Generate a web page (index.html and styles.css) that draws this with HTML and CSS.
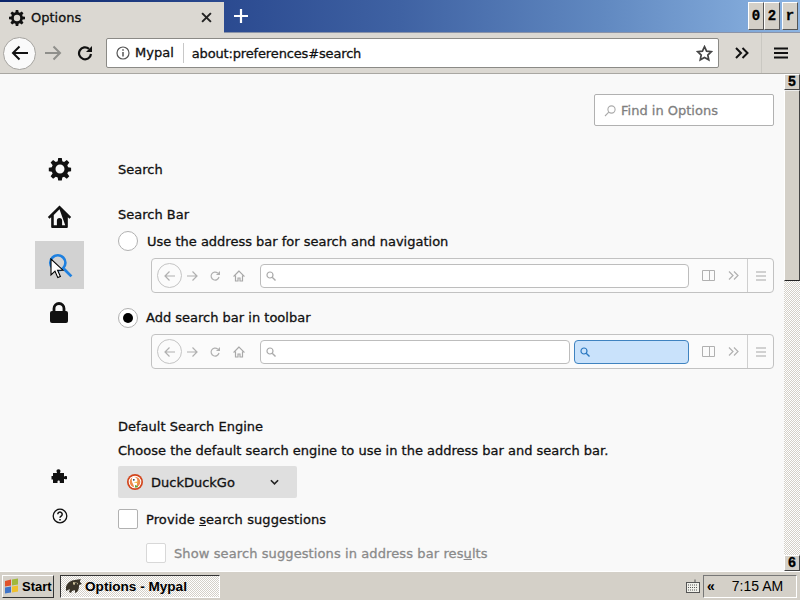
FILE: index.html
```html
<!DOCTYPE html>
<html lang="en">
<head>
<meta charset="UTF-8" />
<title>Options - Mypal</title>
<link rel="stylesheet" href="styles.css">
</head>
<body>
  <div class="titlebar">
    <div class="tab">
      <svg class="tab-icon" viewBox="0 0 18 18"><path d="M7.600 0h2.800l.4 2.600 1.400.6 2.100-1.600 2 2-1.500 2.100.6 1.500 2.600.4v2.800l-2.600.4-.6 1.400 1.500 2.100-2 2-2.100-1.500-1.400.6-.4 2.600H7.600l-.4-2.600-1.500-.6-2.100 1.500-2-2 1.600-2.100-.6-1.400L0 10.400V7.600l2.600-.4.6-1.500-1.600-2.100 2-2 2.100 1.600 1.500-.6zM9 5.400a3.600 3.600 0 1 0 0 7.200 3.600 3.600 0 0 0 0-7.200z" fill="#111" fill-rule="evenodd"/></svg>
      <span class="tab-title">Options</span>
      <svg class="tab-close" viewBox="0 0 10 10"><path d="M1 1l8 8M9 1l-8 8" stroke="#222" stroke-width="1.800"/></svg>
    </div>
    <svg class="new-tab" viewBox="0 0 14 14"><path d="M7 0v14M0 7h14" stroke="#fff" stroke-width="2.200"/></svg>
    <div class="win-buttons">
      <span class="win-btn">0</span><span class="win-btn">2</span><span class="win-btn win-close">r</span>
    </div>
  </div>

  <div class="toolbar">
    <div class="back-btn">
      <svg viewBox="0 0 18 16" width="18" height="16"><path d="M17 8H2M8.500 1.500L2 8l6.500 6.500" fill="none" stroke="#111" stroke-width="2"/></svg>
    </div>
    <svg class="fwd" viewBox="0 0 18 16" width="18" height="16"><path d="M1 8h15M9.500 1.500L16 8l-6.500 6.500" fill="none" stroke="#8f8f8b" stroke-width="2"/></svg>
    <svg class="reload" viewBox="0 0 16 16" width="16" height="16"><path d="M14 9a6 6 0 1 1-2-5.200" fill="none" stroke="#111" stroke-width="2.200"/><path d="M15 1v6H9z" fill="#111"/></svg>
    <div class="urlbar">
      <svg class="info" viewBox="0 0 14 14" width="14" height="14"><circle cx="7" cy="7" r="6" fill="none" stroke="#555" stroke-width="1.200"/><path d="M7 6v4.500M7 3.300v1.500" stroke="#555" stroke-width="1.500"/></svg>
      <span class="identity">Mypal</span>
      <span class="url">about:preferences#search</span>
      <svg class="star" viewBox="0 0 18 18" width="17" height="17"><path d="M9 1.800l2.200 4.700 5 .6-3.700 3.500 1 5.100L9 13.200l-4.500 2.500 1-5.100L1.800 7.100l5-.6z" fill="none" stroke="#444" stroke-width="1.800"/></svg>
    </div>
    <svg class="overflow" viewBox="0 0 14 12" width="14" height="12"><path d="M1 1l5 5-5 5M7.500 1l5 5-5 5" fill="none" stroke="#111" stroke-width="2"/></svg>
    <div class="menu-btn">
      <svg viewBox="0 0 14 12" width="14" height="12"><path d="M0 1.500h14M0 6h14M0 10.500h14" stroke="#111" stroke-width="2"/></svg>
    </div>
  </div>

  <div class="content">
    <div class="page">
      <div class="find-row">
        <div class="find-box">
          <svg viewBox="0 0 12 12" width="12" height="12"><circle cx="7.500" cy="4.500" r="3.600" fill="none" stroke="#aaa" stroke-width="1.100"/><path d="M4.800 7.200L1 11" stroke="#aaa" stroke-width="1.100"/></svg>
          <span>Find in Options</span>
        </div>
      </div>
      <div class="columns">
        <div class="sidebar">
          <div class="nav-item">
            <svg viewBox="0 0 24 24" width="24" height="24"><path d="M10.200 1h3.600l.5 3.300 1.800.8 2.700-2 2.500 2.500-2 2.700.8 1.900 3 .5v3.600l-3 .5-.8 1.800 2 2.700-2.500 2.500-2.700-2-1.800.8-.5 3h-3.600l-.5-3-1.900-.8-2.700 2-2.500-2.500 2-2.700-.8-1.800-3-.5v-3.600l3-.5.800-1.900-2-2.700 2.500-2.500 2.700 2 1.900-.8zM12 7.500a4.500 4.500 0 1 0 0 9 4.500 4.500 0 0 0 0-9z" fill="#111" fill-rule="evenodd"/></svg>
          </div>
          <div class="nav-item nav-home">
            <svg viewBox="0 0 24 24" width="25" height="25"><path d="M12 1.500L0.800 12.500l1.600 1.700 1.600-1.500V22a1 1 0 0 0 1 1h14a1 1 0 0 0 1-1v-9.300l1.600 1.500 1.600-1.700zM17.500 20.500h-3V16a2.500 2.500 0 0 0-5 0v4.500h-3v-10L12 5z" fill="#111" fill-rule="evenodd"/></svg>
          </div>
          <div class="nav-item nav-active">
            <svg viewBox="0 0 24 24" width="26" height="26"><circle cx="10" cy="10" r="7" fill="none" stroke="#1e80e0" stroke-width="2.400"/><path d="M15.500 15.500l7 7" stroke="#1e80e0" stroke-width="2.600"/></svg>
          </div>
          <div class="nav-item nav-lock">
            <svg viewBox="0 0 20 22" width="20" height="22"><path d="M5 9V6.500a5 5 0 0 1 10 0V9" fill="none" stroke="#111" stroke-width="2.800"/><rect x="1" y="9" width="18" height="12" rx="2" fill="#111"/></svg>
          </div>
          <div class="nav-spacer"></div>
          <div class="nav-small nav-puzzle">
            <svg viewBox="0 0 16 16" width="16" height="16"><path d="M2 5h3.500c.5 0 .6-.4.3-.8-.7-1-.3-3 1.700-3s2.400 2 1.700 3c-.3.4-.2.800.3.800H13v3c0 .5.400.6.800.3 1-.6 2.700-.2 2.700 1.400s-1.700 2-2.700 1.400c-.4-.3-.8-.2-.8.3V15H8.800v-1.500c0-1.200-2.300-1.200-2.300 0V15H2v-3.600H.5V8H2z" fill="#111"/></svg>
          </div>
          <div class="nav-small">
            <svg viewBox="0 0 16 16" width="16" height="16"><circle cx="8" cy="8" r="6.800" fill="none" stroke="#111" stroke-width="1.300"/><path d="M5.800 6.300a2.200 2.200 0 1 1 3.400 1.800c-.8.500-1.200.9-1.200 1.700" fill="none" stroke="#111" stroke-width="1.500"/><path d="M8 11v1.600" stroke="#111" stroke-width="1.600"/></svg>
          </div>
        </div>

        <div class="main">
          <h1>Search</h1>
          <h2 class="search-bar-title">Search Bar</h2>
          <label class="radio-row"><span class="radio"></span>Use the address bar for search and navigation</label>
          <div class="preview">
            <span class="mini-back"><svg viewBox="0 0 12 12" width="12" height="12"><path d="M11 6H1M5.500 1.500L1 6l4.500 4.500" fill="none" stroke="#b0b0b0" stroke-width="1.200"/></svg></span>
            <svg class="mini-fwd" viewBox="0 0 12 12" width="12" height="12"><path d="M1 6h10M6.500 1.500L11 6l-4.500 4.500" fill="none" stroke="#b0b0b0" stroke-width="1.200"/></svg>
            <svg class="mini-reload" viewBox="0 0 12 12" width="12" height="12"><path d="M10 7a4 4 0 1 1-1.300-4" fill="none" stroke="#b0b0b0" stroke-width="1.200"/><path d="M11 1v4H7z" fill="#b0b0b0"/></svg>
            <svg class="mini-home" viewBox="0 0 12 12" width="12" height="12"><path d="M6 1L1 6h1.500v5h2.500V8h2v3h2.500V6H11z" fill="none" stroke="#a8a8a8" stroke-width="1.200"/></svg>
            <div class="mini-field mini-url"><svg viewBox="0 0 10 10" width="10" height="10"><circle cx="4" cy="4" r="3" fill="none" stroke="#aaa" stroke-width="1.200"/><path d="M6.200 6.200L9.500 9.500" stroke="#aaa" stroke-width="1.400"/></svg></div>
            <svg class="mini-side" viewBox="0 0 13 11" width="13" height="11"><path d="M.5.500h12v10H.5zM7.500.5v10" fill="none" stroke="#b0b0b0"/></svg>
            <svg class="mini-more" viewBox="0 0 11 9" width="11" height="9"><path d="M1 .5l4 4-4 4M6 .5l4 4-4 4" fill="none" stroke="#b0b0b0" stroke-width="1.200"/></svg>
            <span class="mini-menu"><svg viewBox="0 0 10 10" width="10" height="10"><path d="M0 1h10M0 5h10M0 9h10" stroke="#a8a8a8" stroke-width="1.100"/></svg></span>
          </div>
          <label class="radio-row radio-row-2"><span class="radio radio-on"></span><span class="radio-text">Add search bar in toolbar</span></label>
          <div class="preview preview-2">
            <span class="mini-back"><svg viewBox="0 0 12 12" width="12" height="12"><path d="M11 6H1M5.500 1.500L1 6l4.500 4.500" fill="none" stroke="#b0b0b0" stroke-width="1.200"/></svg></span>
            <svg class="mini-fwd" viewBox="0 0 12 12" width="12" height="12"><path d="M1 6h10M6.500 1.500L11 6l-4.500 4.500" fill="none" stroke="#b0b0b0" stroke-width="1.200"/></svg>
            <svg class="mini-reload" viewBox="0 0 12 12" width="12" height="12"><path d="M10 7a4 4 0 1 1-1.300-4" fill="none" stroke="#b0b0b0" stroke-width="1.200"/><path d="M11 1v4H7z" fill="#b0b0b0"/></svg>
            <svg class="mini-home" viewBox="0 0 12 12" width="12" height="12"><path d="M6 1L1 6h1.500v5h2.500V8h2v3h2.500V6H11z" fill="none" stroke="#a8a8a8" stroke-width="1.200"/></svg>
            <div class="mini-field mini-url"><svg viewBox="0 0 10 10" width="10" height="10"><circle cx="4" cy="4" r="3" fill="none" stroke="#aaa" stroke-width="1.200"/><path d="M6.200 6.200L9.500 9.500" stroke="#aaa" stroke-width="1.400"/></svg></div>
            <div class="mini-field mini-search"><svg viewBox="0 0 10 10" width="10" height="10"><circle cx="4" cy="4" r="3" fill="none" stroke="#2a78c0" stroke-width="1.200"/><path d="M6.200 6.200L9.500 9.500" stroke="#2a78c0" stroke-width="1.400"/></svg></div>
            <svg class="mini-side" viewBox="0 0 13 11" width="13" height="11"><path d="M.5.500h12v10H.5zM7.500.5v10" fill="none" stroke="#b0b0b0"/></svg>
            <svg class="mini-more" viewBox="0 0 11 9" width="11" height="9"><path d="M1 .5l4 4-4 4M6 .5l4 4-4 4" fill="none" stroke="#b0b0b0" stroke-width="1.200"/></svg>
            <span class="mini-menu"><svg viewBox="0 0 10 10" width="10" height="10"><path d="M0 1h10M0 5h10M0 9h10" stroke="#a8a8a8" stroke-width="1.100"/></svg></span>
          </div>

          <h2 class="engine-title">Default Search Engine</h2>
          <p class="engine-desc">Choose the default search engine to use in the address bar and search bar.</p>
          <div class="dropdown">
            <svg viewBox="0 0 16 16" width="16" height="16"><circle cx="8" cy="8" r="8" fill="#d2451c"/><circle cx="8" cy="8" r="6.300" fill="#fff"/><circle cx="8" cy="8" r="5.300" fill="#ee8a4a"/><path d="M5.300 3.300c2.500-1 5 .4 5 3 0 2.200-.5 3.500-.5 6.700H7c0-2.500-2.200-4-2.200-6.500 0-1.200.2-2.200.5-3.200z" fill="#fff"/><path d="M6.500 8.300l4.200-.8v1.800z" fill="#f2b632"/><circle cx="6.800" cy="5.800" r=".9" fill="#234"/><path d="M8 11l2.800 1v1.500H8z" fill="#5fa33a"/></svg>
            <span class="dropdown-label">DuckDuckGo</span>
            <svg class="chevron" viewBox="0 0 10 6" width="9" height="6"><path d="M1 1l4 4 4-4" fill="none" stroke="#222" stroke-width="1.800"/></svg>
          </div>
          <label class="check-row"><span class="checkbox"></span><span>Provide <u>s</u>earch suggestions</span></label>
          <label class="check-row check-sub"><span class="checkbox"></span><span>Show search suggestions in address bar res<u>u</u>lts</span></label>
        </div>
      </div>
      <svg class="cursor" viewBox="0 0 14 22" width="14" height="22"><path d="M1 1v16l4-3.800 2.800 6.400 2.600-1.100-2.800-6.300h5.400z" fill="#fff" stroke="#000" stroke-width="1.100"/></svg>
    </div>

    <div class="scrollbar">
      <span class="sb-btn">5</span>
      <div class="sb-track"><div class="sb-thumb"></div></div>
      <span class="sb-btn">6</span>
    </div>
  </div>

  <div class="taskbar">
    <div class="start">
      <svg viewBox="0 0 16 16" width="16" height="16"><path d="M1 3l6-1.500V7.500L1 8.500z" fill="#e0522a"/><path d="M8 1.500L14 .5v6L8 7.500z" fill="#a0b83c"/><path d="M1 9.500l6-1v6L1 15.500z" fill="#3f74c8"/><path d="M8 8.500l6-1v6l-6 1z" fill="#f0c02c"/></svg>
      <span>Start</span>
    </div>
    <div class="task">
      <svg viewBox="0 0 18 16" width="18" height="16"><path d="M1 9c1-4 5-7 9-7 2 0 4-1 6-1-1 1-1 2-1 3l2 2-3 1c0 2 0 5-2 7l-2 1 0-3-3 1-1 2-2-1 1-3-4 2z" fill="#3a3428"/><path d="M8 4l5 1-1 2-4-.5z" fill="#cbbf98"/><circle cx="11" cy="6" r="1" fill="#111"/></svg>
      <span>Options - Mypal</span>
    </div>
    <svg class="keyboard" viewBox="0 0 14 14" width="14" height="14"><path d="M9 .5v3" stroke="#555"/><rect x=".5" y="3.500" width="13" height="10" fill="#f0f0ea" stroke="#555"/><path d="M2 6h10M2 8.500h10M2 11h10" stroke="#555" stroke-dasharray="1 1"/></svg>
    <div class="tray">
      <span class="tray-arrows">«</span>
      <span class="clock">7:15 AM</span>
    </div>
  </div>
</body>
</html>
```

FILE: styles.css
```css
html, body {
  margin: 0;
  padding: 0;
  width: 800px;
  height: 600px;
  overflow: hidden;
}
body {
  display: flex;
  flex-direction: column;
  font-family: "DejaVu Sans", sans-serif;
  font-size: 13px;
  color: #111;
  background: #d4d0c8;
  -webkit-text-stroke: 0.3px;
}
svg {
  display: block;
  flex: none;
}

/* title bar with the tab */
.titlebar {
  height: 33px;
  display: flex;
  align-items: flex-start;
  background: linear-gradient(90deg, #0a246a 0%, #2b4a90 28%, #3f62a3 50%, #6088c0 75%, #8cb4e2 100%);
  box-shadow: inset 0 -1px 0 #8a93a8;
}
.tab {
  width: 224px;
  height: 31px;
  margin-top: 2px;
  background: #dbd8d2;
  display: flex;
  align-items: center;
  padding: 0 12px 0 9px;
  box-sizing: border-box;
}
.tab-title {
  margin-left: 6px;
  flex: 1;
}
.tab-icon { width: 16px; height: 16px; }
.tab-close { width: 11px; height: 11px; }
.new-tab {
  width: 14px;
  height: 14px;
  margin: 9px 0 0 10px;
}
.win-buttons {
  margin-left: auto;
  margin-right: 2px;
  margin-top: 2px;
  display: flex;
}
.win-btn {
  width: 16px;
  height: 28px;
  background: #d4d0c8;
  border: 1px solid;
  border-color: #fff #555 #555 #fff;
  box-sizing: border-box;
  font-family: "Liberation Mono", monospace;
  font-weight: bold;
  font-size: 14px;
  line-height: 26px;
  text-align: center;
  color: #000;
}
.win-close { margin-left: 2px; }

/* navigation toolbar */
.toolbar {
  height: 41px;
  display: flex;
  align-items: center;
  background: #dbd8d2;
  border-bottom: 1px solid #a9a7a2;
  box-sizing: border-box;
  padding-left: 3px;
}
.back-btn {
  width: 33px;
  height: 33px;
  border-radius: 50%;
  background: #fafafa;
  border: 1px solid #a5a39f;
  box-sizing: border-box;
  display: flex;
  align-items: center;
  justify-content: center;
}
.fwd { margin-left: 8px; }
.reload { margin-left: 15px; }
.urlbar {
  width: 613px;
  height: 30px;
  margin-left: 13px;
  background: #fff;
  border: 1px solid #8b8a86;
  border-radius: 2px;
  box-sizing: border-box;
  display: flex;
  align-items: center;
  padding-left: 9px;
}
.identity {
  margin-left: 5px;
  padding-right: 9px;
  height: 20px;
  line-height: 20px;
  border-right: 1px solid #c8c8c8;
}
.url {
  margin-left: 8px;
  flex: 1;
  letter-spacing: -0.15px;
}
.star { margin-right: 5px; }
.overflow { margin-left: 16px; }
.menu-btn {
  margin-left: 12px;
  width: 38px;
  height: 40px;
  border-left: 1px solid #cac8c2;
  box-sizing: border-box;
  display: flex;
  align-items: center;
  justify-content: center;
}

/* page */
.content {
  height: 497px;
  display: flex;
  background: #f9f9f9;
}
.page {
  flex: 1;
  position: relative;
  overflow: hidden;
}
.find-row {
  display: flex;
  justify-content: flex-end;
  padding: 20px 10px 0 0;
}
.find-box {
  width: 180px;
  height: 32px;
  background: #fff;
  border: 1px solid #b1b1b1;
  border-radius: 2px;
  box-sizing: border-box;
  display: flex;
  align-items: center;
  padding: 1px 0 0 9px;
  color: #7f7f7f;
  gap: 5px;
}
.columns {
  display: flex;
  margin-top: 19px;
}
.sidebar {
  width: 118px;
  padding-left: 35px;
  box-sizing: border-box;
  display: flex;
  flex-direction: column;
}
.nav-item {
  width: 49px;
  height: 48px;
  display: flex;
  align-items: center;
  justify-content: center;
}
.nav-home svg { margin-bottom: 2px; }
.nav-lock svg { margin-left: -2px; margin-bottom: 1px; }
.nav-active { background: #d2d2d2; }
.nav-spacer { height: 120px; }
.nav-small {
  width: 49px;
  height: 39px;
  display: flex;
  align-items: center;
  justify-content: center;
}
.nav-puzzle svg { margin: 0 2px 1px 0; }
.main {
  width: 656px;
}
h1, h2 {
  margin: 0;
  font-size: 13px;
  font-weight: normal;
}
h1 {
  line-height: 16px;
  margin-top: 17px;
}
.search-bar-title {
  line-height: 16px;
  margin-top: 29px;
}
.radio-row {
  display: flex;
  align-items: center;
  height: 20px;
  margin-top: 8px;
  gap: 9px;
}
.radio-row-2 { margin-top: 15px; }
.radio-text { margin: -2px 0 0 -1px; }
.radio {
  width: 20px;
  height: 20px;
  border-radius: 50%;
  border: 1px solid #b1b1b1;
  background: #fff;
  box-sizing: border-box;
  display: flex;
  align-items: center;
  justify-content: center;
}
.radio-on::after {
  content: "";
  width: 10px;
  height: 10px;
  border-radius: 50%;
  background: #000;
}
.preview {
  width: 623px;
  height: 35px;
  margin: 7px 0 0 33px;
  background: #fbfbfb;
  border: 1px solid #c2c2c2;
  border-radius: 4px;
  box-sizing: border-box;
  display: flex;
  align-items: center;
  padding-left: 5px;
}
.preview-2 { margin-top: 6px; }
.mini-back {
  width: 25px;
  height: 25px;
  border: 1px solid #c4c4c4;
  border-radius: 50%;
  box-sizing: border-box;
  display: flex;
  align-items: center;
  justify-content: center;
}
.mini-fwd { margin-left: 4px; }
.mini-reload { margin-left: 11px; }
.mini-home { margin-left: 12px; }
.mini-field {
  height: 24px;
  border-radius: 4px;
  box-sizing: border-box;
  display: flex;
  align-items: center;
  padding-left: 5px;
}
.mini-url {
  flex: 1;
  margin-left: 15px;
  background: #fff;
  border: 1px solid #bdbdbd;
}
.mini-search {
  width: 115px;
  margin-left: 4px;
  background: #c9e2fb;
  border: 1px solid #3f83c0;
}
.mini-side { margin-left: 13px; }
.mini-more { margin-left: 13px; }
.mini-menu {
  margin-left: 8px;
  width: 26px;
  height: 33px;
  border-left: 1px solid #cfcfcf;
  box-sizing: border-box;
  display: flex;
  align-items: center;
  justify-content: center;
}
.engine-title {
  line-height: 16px;
  margin-top: 50px;
}
.engine-desc {
  margin: 8px 0 0;
  line-height: 16px;
}
.dropdown {
  width: 179px;
  height: 32px;
  margin-top: 7px;
  background: #dfdfdf;
  border-radius: 2px;
  display: flex;
  align-items: center;
  padding-left: 9px;
  box-sizing: border-box;
}
.dropdown-label {
  margin-left: 8px;
  width: 119px;
}
.check-row {
  display: flex;
  align-items: center;
  height: 20px;
  margin-top: 11px;
  gap: 8px;
  letter-spacing: 0.1px;
}
.checkbox {
  width: 20px;
  height: 20px;
  background: #fff;
  border: 1px solid #b1b1b1;
  border-radius: 2px;
  box-sizing: border-box;
}
.check-sub {
  margin: 14px 0 0 28px;
  color: #8a8a8a;
}
.check-sub .checkbox { border-color: #d8d8d8; }
.cursor {
  position: absolute;
  left: 50px;
  top: 184px;
}

/* scrollbar, win classic look */
.scrollbar {
  width: 16px;
  margin-left: auto;
  display: flex;
  flex-direction: column;
}
.sb-btn {
  height: 16px;
  background: #d4d0c8;
  border: 1px solid;
  border-color: #fff #444 #444 #fff;
  box-sizing: border-box;
  font-family: "Liberation Mono", monospace;
  font-weight: bold;
  font-size: 14px;
  line-height: 14px;
  text-align: center;
  color: #000;
}
.sb-track {
  flex: 1;
  background-color: #fff;
  background-image: conic-gradient(#d4d0c8 25%, #fff 0 50%, #d4d0c8 0 75%, #fff 0);
  background-size: 2px 2px;
}
.sb-thumb {
  height: 191px;
  background: #d4d0c8;
  border: 1px solid;
  border-color: #eee #444 #222 #fff;
  box-sizing: border-box;
}

/* taskbar */
.taskbar {
  height: 29px;
  display: flex;
  align-items: center;
  background: #d4d0c8;
  border-top: 1px solid #fff;
  box-sizing: border-box;
  padding: 0 3px 0 2px;
  font-family: "Liberation Sans", sans-serif;
  font-size: 14px;
  color: #000;
  -webkit-text-stroke: 0;
}
.start {
  width: 52px;
  height: 23px;
  display: flex;
  align-items: center;
  gap: 2px;
  padding-left: 1px;
  box-sizing: border-box;
  border: 1px solid;
  border-color: #fff #333 #333 #fff;
  font-weight: bold;
  font-size: 13px;
}
.task {
  width: 160px;
  height: 23px;
  margin-left: 6px;
  display: flex;
  align-items: center;
  gap: 2px;
  padding-left: 4px;
  box-sizing: border-box;
  border: 1px solid;
  border-color: #333 #fff #fff #333;
  background-color: #fff;
  background-image: conic-gradient(#d4d0c8 25%, #fff 0 50%, #d4d0c8 0 75%, #fff 0);
  background-size: 2px 2px;
  font-weight: bold;
  font-size: 13.6px;
}
.keyboard { margin-left: auto; }
.tray {
  width: 94px;
  height: 23px;
  margin-left: 3px;
  border: 1px solid;
  border-color: #777 #fff #fff #777;
  box-sizing: border-box;
  display: flex;
  align-items: center;
  padding-left: 3px;
}
.tray-arrows { font-weight: bold; }
.clock {
  margin-left: 17px;
  font-size: 14px;
}
```
